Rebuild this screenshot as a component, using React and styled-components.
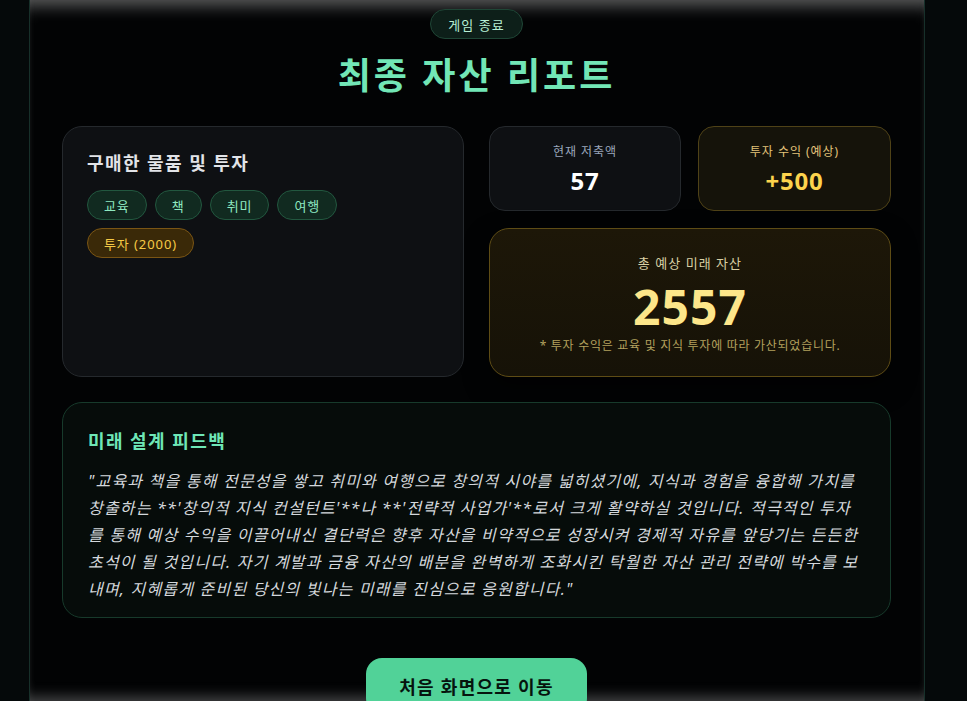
import React from 'react';
import styled, { createGlobalStyle } from 'styled-components';

const GlobalStyle = createGlobalStyle`
  html, body {
    margin: 0;
    padding: 0;
    background: #05090a;
    font-family: "Noto Sans", "Noto Sans CJK KR", sans-serif;
  }
  * { box-sizing: border-box; }
`;

const Page = styled.div`
  height: 100vh;
  padding-left: 29px;
  overflow: hidden;
`;

const Panel = styled.main`
  width: 896px;
  height: 100%;
  background: #020304;
  border-left: 1px solid #17302a;
  border-right: 1px solid #17302a;
  box-shadow: inset 0 16px 16px -10px rgba(200, 200, 200, 0.45),
    inset 0 -14px 14px -10px rgba(200, 200, 200, 0.35);
  padding: 9px 33px 0 32px;
  display: flex;
  flex-direction: column;
  align-items: center;
  overflow: hidden;

  & > * {
    flex-shrink: 0;
  }
`;

const Badge = styled.div`
  height: 30px;
  padding: 0 17px;
  border-radius: 999px;
  background: #0d1f19;
  border: 1px solid #1f4636;
  color: #b8f0d6;
  font-size: 13px;
  letter-spacing: 0.08em;
  display: flex;
  align-items: center;
`;

const Title = styled.h1`
  margin: 15px 0 29px;
  font-size: 36px;
  line-height: 1.2;
  font-weight: 700;
  color: #72e6b6;
  letter-spacing: 3px;
`;

const Grid = styled.div`
  width: 829px;
  display: grid;
  grid-template-columns: 402px 402px;
  gap: 25px;
`;

const Card = styled.section`
  border-radius: 20px;
  border: 1px solid ${p => p.$border || '#25292d'};
  background: ${p => p.$bg || '#0e1013'};
`;

const ItemsCard = styled(Card)`
  padding: 24px 24px;
  height: 251px;
`;

const CardTitle = styled.h2`
  margin: 0 0 14px;
  font-size: 18px;
  font-weight: 700;
  letter-spacing: 0.08em;
  color: ${p => p.$color || '#e2e4e8'};
  line-height: 1.4;
`;

const Tags = styled.div`
  display: flex;
  flex-wrap: wrap;
  gap: 8px;
  width: 280px;
`;

const Tag = styled.span`
  height: 30px;
  padding: 0 16px;
  border-radius: 999px;
  font-size: 13px;
  letter-spacing: 0.07em;
  display: flex;
  align-items: center;
  background: ${p => (p.$gold ? '#3a2908' : '#112a20')};
  border: 1px solid ${p => (p.$gold ? '#7a5514' : '#22573f')};
  color: ${p => (p.$gold ? '#f6c945' : '#8ee9c0')};
`;

const Right = styled.div`
  display: flex;
  flex-direction: column;
  gap: 17px;
`;

const StatRow = styled.div`
  display: grid;
  grid-template-columns: 192px 193px;
  gap: 17px;
`;

const StatCard = styled(Card)`
  height: 85px;
  border-radius: 16px;
  display: flex;
  flex-direction: column;
  align-items: center;
  padding-top: 16px;
`;

const StatLabel = styled.div`
  font-size: 12px;
  line-height: 18px;
  letter-spacing: 0.08em;
  color: ${p => p.$color};
`;

const StatValue = styled.div`
  margin-top: 6px;
  font-size: 24px;
  line-height: 28px;
  font-weight: 700;
  letter-spacing: 0.03em;
  color: ${p => p.$color};
`;

const TotalCard = styled(Card)`
  height: 149px;
  display: flex;
  flex-direction: column;
  align-items: center;
  padding-top: 24px;
  box-shadow: 0 10px 24px rgba(0, 0, 0, 0.6);
  background: linear-gradient(180deg, #1d1708 0%, #161207 100%);
`;

const TotalLabel = styled.div`
  font-size: 13px;
  line-height: 20px;
  letter-spacing: 0.08em;
  color: #d8cfa4;
`;

const TotalValue = styled.div`
  margin-top: 4px;
  font-size: 48px;
  line-height: 60px;
  font-weight: 700;
  color: #fde68a;
  letter-spacing: 1px;
`;

const TotalNote = styled.div`
  margin-top: 1px;
  font-size: 12px;
  line-height: 16px;
  letter-spacing: 0.06em;
  color: #b3a15e;
`;

const FeedbackCard = styled(Card)`
  grid-column: 1 / -1;
  height: 216px;
  padding: 26px 25px;
`;

const FeedbackText = styled.p`
  margin: 0;
  font-size: 16px;
  line-height: 27px;
  font-style: italic;
  color: #d4d8dc;
  letter-spacing: 1.2px;
`;

const HomeButton = styled.button`
  margin-top: 40px;
  width: 221px;
  height: 56px;
  border: none;
  border-radius: 16px;
  background: #51d298;
  color: #06140e;
  font-family: inherit;
  font-size: 18px;
  font-weight: 700;
  letter-spacing: 0.07em;
  padding: 0;
  cursor: pointer;
`;

const items = ['교육', '책', '취미', '여행'];

export default function App() {
  return (
    <>
      <GlobalStyle />
      <Page>
        <Panel>
          <Badge>게임 종료</Badge>
          <Title>최종 자산 리포트</Title>
          <Grid>
            <ItemsCard>
              <CardTitle>구매한 물품 및 투자</CardTitle>
              <Tags>
                {items.map(i => (
                  <Tag key={i}>{i}</Tag>
                ))}
                <Tag $gold>투자 (2000)</Tag>
              </Tags>
            </ItemsCard>
            <Right>
              <StatRow>
                <StatCard>
                  <StatLabel $color="#9aa6bb">현재 저축액</StatLabel>
                  <StatValue $color="#ffffff">57</StatValue>
                </StatCard>
                <StatCard $bg="#15130a" $border="#4f4217">
                  <StatLabel $color="#e3c37a">투자 수익 (예상)</StatLabel>
                  <StatValue $color="#fcd34d">+500</StatValue>
                </StatCard>
              </StatRow>
              <TotalCard $border="#5e4c15">
                <TotalLabel>총 예상 미래 자산</TotalLabel>
                <TotalValue>2557</TotalValue>
                <TotalNote>* 투자 수익은 교육 및 지식 투자에 따라 가산되었습니다.</TotalNote>
              </TotalCard>
            </Right>
            <FeedbackCard $bg="#060c0a" $border="#173a2b">
              <CardTitle $color="#6ee7b7">미래 설계 피드백</CardTitle>
              <FeedbackText>
                "교육과 책을 통해 전문성을 쌓고 취미와 여행으로 창의적 시야를 넓히셨기에, 지식과 경험을 융합해 가치를 창출하는 **'창의적 지식 컨설턴트'**나 **'전략적 사업가'**로서 크게 활약하실 것입니다. 적극적인 투자를 통해 예상 수익을 이끌어내신 결단력은 향후 자산을 비약적으로 성장시켜 경제적 자유를 앞당기는 든든한 초석이 될 것입니다. 자기 계발과 금융 자산의 배분을 완벽하게 조화시킨 탁월한 자산 관리 전략에 박수를 보내며, 지혜롭게 준비된 당신의 빛나는 미래를 진심으로 응원합니다."
              </FeedbackText>
            </FeedbackCard>
          </Grid>
          <HomeButton>처음 화면으로 이동</HomeButton>
        </Panel>
      </Page>
    </>
  );
}
